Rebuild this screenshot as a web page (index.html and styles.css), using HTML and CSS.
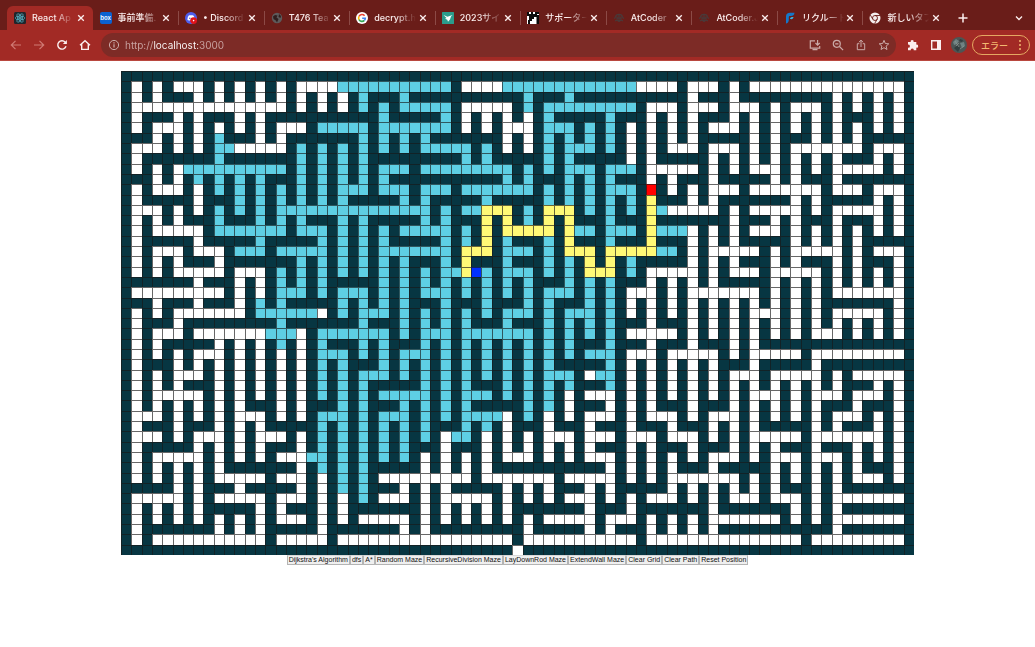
FILE: index.html
```html
<!DOCTYPE html>
<html lang="ja">
<head>
<meta charset="utf-8">
<title>React App</title>
<link rel="stylesheet" href="styles.css">
</head>
<body>
<svg class="defs" width="0" height="0" aria-hidden="true">
  <symbol id="i-close" viewBox="0 0 8 8"><path d="M1.2 1.2 6.8 6.8M6.8 1.2 1.2 6.8" fill="none" stroke="currentColor" stroke-width="1.3"/></symbol>
  <symbol id="i-atcoder" viewBox="0 0 12 12"><path d="M2.5 5.5a3.5 3.2 0 0 1 7 0M1 6.5l1.5-1M11 6.5l-1.500-1M4 4.500v3.500M8 4.500v3.500M6 2v7M2 9l2-1 2 1.500 2-1.500 2 1M4.500 6.200h3" fill="none" stroke="#493a3a" stroke-width="1.200"/></symbol>
</svg>

<header class="browser">
  <div class="tabstrip">
    <nav class="tabs" aria-label="Tabs">
      <div class="tab tab-active">
        <svg class="favicon" viewBox="0 0 12 12"><rect width="12" height="12" rx="1.500" fill="#20262c"/><g fill="none" stroke="#58b8cc" stroke-width=".7"><ellipse cx="6" cy="6" rx="4.800" ry="1.900"/><ellipse cx="6" cy="6" rx="4.800" ry="1.900" transform="rotate(60 6 6)"/><ellipse cx="6" cy="6" rx="4.800" ry="1.900" transform="rotate(120 6 6)"/></g><circle cx="6" cy="6" r="1" fill="#58b8cc"/></svg>
        <a class="title" href="#">React Ap</a>
        <button class="close" aria-label="Close"><svg><use href="#i-close"/></svg></button>
      </div>
      <div class="tab">
        <span class="favicon box">box</span>
        <a class="title" href="#">事前準備.</a>
        <button class="close" aria-label="Close"><svg><use href="#i-close"/></svg></button>
      </div>
      <div class="tab">
        <svg class="favicon" viewBox="0 0 12 12"><circle cx="6" cy="6" r="6" fill="#4f5fee"/><path d="M2.500 8C2.300 5.500 3.300 3.500 4.300 3.300L7.700 3.300C9 3.700 9.700 5.500 9.500 8L8 8.500H4Z" fill="#fff"/><circle cx="4.800" cy="6.200" r=".8" fill="#4f5fee"/><circle cx="8.600" cy="8.600" r="3.400" fill="#e0141b"/><circle cx="8.600" cy="8.600" r=".8" fill="#fff"/></svg>
        <a class="title" href="#">• Discord</a>
        <button class="close" aria-label="Close"><svg><use href="#i-close"/></svg></button>
      </div>
      <div class="tab">
        <svg class="favicon" viewBox="0 0 12 12"><circle cx="6" cy="6" r="5.200" fill="#5d5a5b"/><path d="M2 4.500 4 3 6.500 3.500 5.500 5.500 7.500 7 6 10.500 4.800 8.500 2.500 7ZM8 2l2 2-.500 2-2-1Z" fill="#301e1e"/></svg>
        <a class="title" href="#">T476 Tea</a>
        <button class="close" aria-label="Close"><svg><use href="#i-close"/></svg></button>
      </div>
      <div class="tab">
        <svg class="favicon" viewBox="0 0 12 12"><circle cx="6" cy="6" r="6" fill="#fff"/><g fill="none" stroke-width="1.600"><path d="M3 4.400A3.400 3.400 0 0 1 8.600 3.700" stroke="#ea4335"/><path d="M3 7.600A3.400 3.400 0 0 1 3 4.400" stroke="#fbbc05"/><path d="M8.400 8.400A3.400 3.400 0 0 1 3 7.600" stroke="#34a853"/><path d="M6.200 6.200H9.300A3.400 3.400 0 0 1 8.400 8.400" stroke="#4285f4"/></g></svg>
        <a class="title" href="#">decrypt.h</a>
        <button class="close" aria-label="Close"><svg><use href="#i-close"/></svg></button>
      </div>
      <div class="tab">
        <svg class="favicon" viewBox="0 0 12 12"><rect width="12" height="12" rx=".5" fill="#2b9c8c"/><path d="M1.500 3 5.500 4.800 10.500 3 9 4.500 8 7.500 6 9.800 5.300 7.800 3 6.800 4.500 6Z" fill="#fff"/></svg>
        <a class="title" href="#">2023サイ</a>
        <button class="close" aria-label="Close"><svg><use href="#i-close"/></svg></button>
      </div>
      <div class="tab">
        <svg class="favicon" viewBox="0 0 12 12"><rect width="12" height="12" fill="#fff"/><path d="M0 0h2v2h2V0h2v2h2V0h4v2h-2v1h2v9H9.500V5H7v2H5v2H3v3H1V8h1V4H0Z" fill="#0c0c0c"/></svg>
        <a class="title" href="#">サポーター</a>
        <button class="close" aria-label="Close"><svg><use href="#i-close"/></svg></button>
      </div>
      <div class="tab">
        <svg class="favicon"><use href="#i-atcoder"/></svg>
        <a class="title" href="#">AtCoder</a>
        <button class="close" aria-label="Close"><svg><use href="#i-close"/></svg></button>
      </div>
      <div class="tab">
        <svg class="favicon"><use href="#i-atcoder"/></svg>
        <a class="title" href="#">AtCoder.J</a>
        <button class="close" aria-label="Close"><svg><use href="#i-close"/></svg></button>
      </div>
      <div class="tab">
        <svg class="favicon" viewBox="0 0 12 12"><path d="M2 11.500V4.500C2 2 3.500.8 6 .8H10.500C10.300 3 9 4 7 4H6C5 4 4.800 4.700 4.800 5.500V8C4.800 10 3.500 11.300 2 11.500Z" fill="#1577c9"/><path d="M6 7C6 5.500 7 5 9.500 5 9.300 6.800 8.200 7.500 6 7Z" fill="#35b5ea"/></svg>
        <a class="title" href="#">リクルート</a>
        <button class="close" aria-label="Close"><svg><use href="#i-close"/></svg></button>
      </div>
      <div class="tab">
        <svg class="favicon" viewBox="0 0 12 12"><circle cx="6" cy="6" r="5.500" fill="#f5eeee"/><g fill="none" stroke="#6a1d19" stroke-width=".9"><circle cx="6" cy="6" r="2.500"/><path d="M6 3.500H11M3.800 7.200 1.300 3M8.200 7.200 5.700 11.400"/></g></svg>
        <a class="title" href="#">新しいタブ</a>
        <button class="close" aria-label="Close"><svg><use href="#i-close"/></svg></button>
      </div>
    </nav>
    <button class="strip-button new-tab" aria-label="New tab"><svg viewBox="0 0 10 10"><path d="M5 .5v9M.5 5h9" fill="none" stroke="currentColor" stroke-width="1.500"/></svg></button>
    <button class="strip-button" aria-label="Search tabs"><svg viewBox="0 0 10 10"><path d="M2 3.500 5 6.500 8 3.500" fill="none" stroke="currentColor" stroke-width="1.300"/></svg></button>
  </div>

  <div class="toolbar">
    <button class="tool dim" aria-label="Back"><svg viewBox="0 0 12 12"><path d="M11 6H1.500M5.500 1.800 1.300 6l4.200 4.200" fill="none" stroke="currentColor" stroke-width="1.200"/></svg></button>
    <button class="tool dim" aria-label="Forward"><svg viewBox="0 0 12 12"><path d="M1 6h9.500M6.500 1.800 10.700 6l-4.200 4.200" fill="none" stroke="currentColor" stroke-width="1.200"/></svg></button>
    <button class="tool" aria-label="Reload"><svg viewBox="0 0 12 12"><path d="M10 7.200A4.200 4.200 0 1 1 9.200 3.200" fill="none" stroke="currentColor" stroke-width="1.400"/><path d="M10.900 1v4H6.900Z" fill="currentColor"/></svg></button>
    <button class="tool" aria-label="Home"><svg viewBox="0 0 12 12"><path d="M1 6.300 6 1.700l5 4.600M2.700 5.200v5.200h6.600V5.200" fill="none" stroke="currentColor" stroke-width="1.400"/></svg></button>
    <div class="omnibox">
      <svg class="info" viewBox="0 0 12 12"><circle cx="6" cy="6" r="4.600" fill="none" stroke="currentColor"/><path d="M6 5.300v3.200M6 3.300v1.100" stroke="currentColor" stroke-width="1.200"/></svg>
      <input class="address" type="text" aria-label="Address" value="http://localhost:3000">
      <button class="tool" aria-label="Install"><svg viewBox="0 0 12 12"><path d="M6 1.800H1.300v7.400h9.400V7M3.500 10.600h5M8.600 1v4.800M6.500 4l2.100 2.100L10.700 4" fill="none" stroke="currentColor" stroke-width="1.200"/></svg></button>
      <button class="tool" aria-label="Zoom"><svg viewBox="0 0 12 12"><circle cx="4.800" cy="4.800" r="3.500" fill="none" stroke="currentColor" stroke-width="1.200"/><path d="M3.200 4.800h3.200M7.500 7.500l3.600 3.600" stroke="currentColor" stroke-width="1.200"/></svg></button>
      <button class="tool" aria-label="Share"><svg viewBox="0 0 12 12"><path d="M4.300 4.700H2.300v6h7.400v-6h-2M6 8V1.300M3.800 3.300 6 1.200l2.200 2.100" fill="none" stroke="currentColor"/></svg></button>
      <button class="tool" aria-label="Bookmark"><svg viewBox="0 0 12 12"><path d="M6 1.300 7.300 4.500l3.500.3-2.700 2.300.9 3.400L6 8.700l-3 1.800.9-3.400L1.200 4.800l3.500-.3Z" fill="none" stroke="currentColor"/></svg></button>
    </div>
    <button class="tool" aria-label="Extensions"><svg viewBox="0 0 12 12"><path d="M1 3h2.700a1.500 1.500 0 1 1 2.900 0H9.300v2.700a1.500 1.500 0 1 1 0 2.900V11.300H6.700a1.500 1.500 0 1 0-2.900 0H1V8.600a1.500 1.500 0 1 0 0-2.900Z" fill="currentColor"/></svg></button>
    <button class="tool" aria-label="Side panel"><svg viewBox="0 0 12 12"><path d="M1.700 1.700h8.600v8.600H1.700Z" fill="none" stroke="currentColor" stroke-width="1.400"/><path d="M7 1.500h3.500v9H7Z" fill="currentColor"/></svg></button>
    <button class="avatar" aria-label="Profile"><svg viewBox="0 0 16 16"><circle cx="8" cy="8" r="8" fill="#4c5655"/><path d="M2 5 5 2 8 4 6 7 3 8ZM9 6l4-1 1 4-3 2Z" fill="#6f8282"/><path d="M3 11 7 8l2 3-2 4ZM9 2l3 1-1 2-3-1Z" fill="#323e3f"/><path d="M5 9 8 6M9 12l4-3M4 4l4 6" stroke="#8d9894" stroke-width=".7"/></svg></button>
    <button class="error"><span>エラー</span><svg viewBox="0 0 4 12"><g fill="currentColor"><circle cx="2" cy="2" r="1"/><circle cx="2" cy="6" r="1"/><circle cx="2" cy="10" r="1"/></g></svg></button>
  </div>
</header>

<main class="page">
  <div class="grid" id="grid"></div>
  <div class="controls">
    <button>Dijkstra's Algorithm</button><button>dfs</button><button>A*</button><button>Random Maze</button><button>RecursiveDivision Maze</button><button>LayDownRod Maze</button><button>ExtendWall Maze</button><button>Clear Grid</button><button>Clear Path</button><button>Reset Position</button>
  </div>
</main>
<script src="maze.js"></script>
</body>
</html>
```
FILE: styles.css
```css
* {
  box-sizing: border-box;
}

body {
  margin: 0;
  background: #fff;
  font-family: Inter, "Noto Sans CJK JP", sans-serif;
}

button {
  margin: 0;
  padding: 0;
  border: 0;
  background: none;
  color: inherit;
  font: inherit;
}

svg {
  display: block;
}

.defs {
  position: absolute;
}

.browser {
  color: #fbeeee;
}

.tabstrip {
  display: flex;
  align-items: center;
  height: 30px;
  padding: 0 8px 0 7px;
  background: #6a1d19;
}

.tabs {
  display: flex;
  flex: 1;
  align-self: stretch;
  min-width: 0;
  padding-top: 6px;
}

.tab {
  display: flex;
  flex: 1 1 0;
  align-items: center;
  min-width: 0;
  padding: 0 8px 0 7px;
  background: linear-gradient(#8c4a46, #8c4a46) left center / 1px 14px no-repeat;
}

.tab-active {
  border-radius: 6px 6px 0 0;
  background: #a22a25;
}

.tab-active + .tab {
  background: none;
}

.favicon {
  flex: none;
  width: 12px;
  height: 12px;
}

.box {
  border-radius: 2px;
  background: #0b62d0;
  color: #fff;
  font-size: 6px;
  font-weight: 600;
  line-height: 12px;
  text-align: center;
}

.title {
  flex: 1;
  min-width: 0;
  margin: 0 2px 0 6px;
  overflow: hidden;
  color: inherit;
  font-size: 9px;
  font-weight: 500;
  line-height: 16px;
  text-decoration: none;
  white-space: nowrap;
  mask-image: linear-gradient(90deg, #000 22px, transparent 42px);
}

.close,
.close svg {
  flex: none;
  width: 8px;
  height: 8px;
}

.strip-button {
  display: grid;
  flex: none;
  place-items: center;
  width: 16px;
  height: 16px;
  margin-top: 5px;
}

.strip-button svg {
  width: 10px;
  height: 10px;
}

.new-tab {
  margin-right: 40px;
  margin-left: 7px;
}

.toolbar {
  display: flex;
  align-items: center;
  height: 31px;
  padding: 0 5px 0 4px;
  border-bottom: 1px solid #b9483f;
  background: #a22a25;
}

.tool {
  display: grid;
  flex: none;
  place-items: center;
  width: 23px;
  height: 24px;
}

.tool svg {
  width: 12px;
  height: 12px;
}

.dim {
  color: #d07a74;
}

.omnibox {
  display: flex;
  flex: 1;
  align-items: center;
  min-width: 0;
  height: 24px;
  margin: 0 5px;
  padding: 0 1px 0 7px;
  border-radius: 12px;
  background: #7d2b26;
  color: #cbaaa8;
}

.info {
  flex: none;
  width: 12px;
  height: 12px;
}

.address {
  flex: 1;
  min-width: 0;
  height: 16px;
  margin-left: 5px;
  padding: 0;
  border: 0;
  outline: 0;
  background-image: linear-gradient(90deg, #cba6a4 29px, #fff 29px, #fff 73px, #cba6a4 73px);
  -webkit-background-clip: text;
  background-clip: text;
  -webkit-text-fill-color: transparent;
  font: 10px/16px Inter, sans-serif;
}

.avatar svg {
  width: 16px;
  height: 16px;
}

.avatar {
  margin: 0 5px 0 4px;
}

.error {
  display: flex;
  align-items: center;
  justify-content: space-between;
  width: 58px;
  height: 20px;
  padding: 0 7px 0 8px;
  border: 1px solid #e5a862;
  border-radius: 10px;
  color: #f3b871;
  font-size: 9px;
  font-weight: 500;
}

.error svg {
  width: 4px;
  height: 12px;
}

.page {
  display: flex;
  flex-direction: column;
  align-items: center;
  padding-top: 10px;
}

.grid {
  display: grid;
  grid-template-columns: repeat(77, 1fr);
  grid-template-rows: repeat(47, 1fr);
  width: 76.6%;
  aspect-ratio: 77 / 47;
}

.cell {
  border: solid rgba(24, 24, 24, 0.66);
  border-width: 1px 0 0 1px;
  background: #fff;
}

.wall {
  background: #073642;
}

.visited {
  background: #5ecfe4;
}

.route {
  background: #fff976;
}

.goal {
  background: #f00;
}

.start {
  background: #0030ff;
}

.controls {
  display: flex;
}

.controls button {
  height: 10px;
  padding: 0 1px;
  border: 1px solid #b4b4b4;
  border-top-color: #d8d8d8;
  background: #efefef;
  color: #111;
  font: 7px/8px "Liberation Sans", sans-serif;
  white-space: nowrap;
}
```
FILE: maze.js
```js
// One string per maze row; spaces only group the columns.
// '#' wall, '.' open, 'b' visited, 'y' shortest path, 'S' start, 'R' goal
const rows = [
  "#################### #################### #################### #################",
  "#.#.#...#.#.#.#.#... .bbbbbbbbbbb#....bbb bbbbbbbbbb....#...#. #...............#",
  "#.#.###.#.#.#.#.#.#. #.#b###b###########b ###b###########.###. #########.#.#.#.#",
  "#...............#.#. #.#b#b#bbbbb#.....#b #bbbbbbbbb#...#...#. ..#.#...#.#.#.#.#",
  "#.###.#.###.#.###### #####b#####b#.#.#.#. #b#####b###.#.#.###. #.#.#.#.#.###.#.#",
  "#.#...#.#.#.#.#...#b bbbb#bbbbbbb#.#.#... #bbb#b#b#.#.#.#.#... #.#.#.#.#.#.#.#.#",
  "###.#.#.#b###.#.#### ###b#b#b#b#######.#. #b#b#b#b#.#.#.#.#### #.#.###.#.#.#####",
  "#...#.#.#bb.....#b#b #b#b#b#b#bbbbb#b#.#. #b#bbb#b#.#.#...#... #.#.#.......#...#",
  "#.#######b#######b#b #b#b#########b#b#### #b#b#####.#.#####.#. #.#.#.#.#.###.#.#",
  "#.#.#.bbbbbbbbbb#b#b #b#b#bbb#bbbbbbbbb#b #b#bbb#bbb#.....#.#. #...#.#.#.....#.#",
  "###.#.#b#b#b#b###b#b #b#b#b###########b#b ###b#b#b###.#.###.## ###.#.###.#######",
  "#.#...#.#b#b#b#b#b#b #bbb#bbb#bbb#bbbbbbb #b#b#b#bbb#R#.#.#... #.......#...#...#",
  "#.#####.###b#b#b#b#b #b#####b#b#####b#### #b#b#b#b#b#y###.#.## #####.#.#####.#.#",
  "#...#.#.#b#b#b#bbbbb bbbbbbbbbb#b#bbyyy#b #yyy#b#b#b#yb.....#. #.....#.#.....#.#",
  "#.#.#.###b###b#b#b## #b#b#####b#b###y#y#b #y#y###b###y#######. ###.#.###.###.#.#",
  "#.#.....#bbbbbbb#bbb #b#b#b#bbbbb#b#y#yyy yy#ybb#bbb#ybbb.#.#. #...#.#.#.#.#.#.#",
  "#.#####.#####b#####b #b#b#b#####b#b#y#b## #b#y###b###y###.#.#. #####.#.#.#.#####",
  "#.#...#...#bbb#bbbbb #b#b#bbbbbbb#yyy#bbb #b#yyy#yyyyybb#.#... ..#.#.....#.#...#",
  "#.#.#.###.#######b#b #b#b#b#b###b#y###b## #b#b#y#y#b#####.#.#. ###.#.###.#.###.#",
  "#.#.#.....#...#b#b#b #b#b#b#b#b#bbySb#bbb #b#b#yyy#b#.....#.#. ..#.....#.#.#.#.#",
  "#######.###.#.#b#b#b #####b#b#b#b#b#b#b#b ###b#b#b###.#.#.#.## ###.#.#.#.#.#.#.#",
  "#.........#.#.#bbb#b #bbb#b#b#bbb#b#b#b#b #bbb#b#b#...#.#..... ..#.#.#.#.......#",
  "###.###.###.#b#b#### #b#b#b#b###b###b###b #b###b#b#.#.#.#.#.#. #.#.#.#.#######.#",
  "#.#.#.......#bbbbbb. #b#bbb#b#b#b#b#b#bbb #b#bbb#b#.#.#.#.#.#. #...#.#.#.....#.#",
  "#.###.#########b#### ###b###b#b#b#b###b## #b#b#b#b###.###.#.#. #.#.#.#.#.#.#.#.#",
  "#.#...#.......bbb.#b bbbbbb#b#bbb#bbbbbbb #b#b#b#b#.....#.#.#. #.#.#.#...#.#.#.#",
  "#.#.#####.#.#.#b#.#b ###b#b###b#b#b#b#b#b #b#b###b###.###.###. #.###############",
  "#.#.#.#...#.#.#.#.#b bb#b#b#bbb#b#b#b#b#b #b#b#bbb#...#.....#. #.....#.........#",
  "#.###.#.#.#.#.#.#.#b #b###b#b#b#b#b#b#b#b #b#####b#.#.#.#.#.## #.#####.#########",
  "#.#.#...#.#.#.#.#.#b #b#bbb#b#b#b#b#b#b#b #bbb#.bb#.#.#.#.#.#. ..#.....#.#.....#",
  "#.#.#.###.#.#.#.#.#b #b#b#####b#b#b###b#b #b#b###b#.#.#.#.#.#. #.#.#.#.#.###.#.#",
  "#.#.....#.#.#.#.#.#b #b#b#bbbbb#b#bbb#b#b #b#.#...#.#.#.#.#.#. #...#.#...#...#.#",
  "#.#.#.#.#.#.###.#.## #b#b###b#b#b#b#####b #b#.###.#.#.###.###. #.#.#.#.###.###.#",
  "#...#.#.#.#...#.#.#b bb#b#bbb#b#b#bbbb.#b #.#.#...#.#...#.#... #.#.#.#.#...#.#.#",
  "#.###.###.#.#.#####b #b#b#b#b#b###b#b#.## #.###.###.###.###.#. #.#####.#.###.#.#",
  "#...#.#...#.#...#.#b #b#b#b#b#b#.bb#.#.#. #...#...#...#...#.#. #.....#.......#.#",
  "#.#####.#.#.#.###.#b #b#b#b#b###.###.#.#. #.#.#.###.#.###.###. #.#.###.###.#.#.#",
  "#.#.....#.#.#.#...bb #b#b#b#b#.#.#.#.#... #.#.#...#.#.#.#.#... #.#...#...#.#.#.#",
  "#.#.#.#.#.#######.#b #b#b#####.#.#.#.#### #######.#.#.#.###.## ###.#.#.#.#.###.#",
  "#.#.#.#.#.....#...#. #b#b#.........#..... ..#.....#.#.#....... #.#.#.#.#.#...#.#",
  "#####.#.###.#####.#. #b#b###.#.#.#####.#. #.###.#.#####.#.#.#. #.#.###.#.#######",
  "#.....#.#.....#...#. #.#b#...#.#.....#.#. #.#...#.#.#...#.#.#. ..#...#.#.......#",
  "#.#.#.#.#####.#.###. #.#######.#.#.#.#.## #####.###.#######.## #####.#.#.#######",
  "#.#.#.#.#.#.#.#...#. #.#.....#.#.#.#.#.#. #.....#...#.#.#.#... ....#.#.#.......#",
  "#.#######.#.#.#####. #######.#.#########. #####.#.###.#.#.#.## #########.#######",
  "#.#...........#..... #.................#. ..........#......... ......#.........#",
  "#################### ##################.# #################### #################"
];

const kinds = { "#": " wall", b: " visited", y: " route", R: " goal", S: " start" };
const grid = document.getElementById("grid");

for (const row of rows) {
  for (const mark of row.replaceAll(" ", "")) {
    const cell = document.createElement("div");
    cell.className = "cell" + (kinds[mark] || "");
    grid.append(cell);
  }
}
```
